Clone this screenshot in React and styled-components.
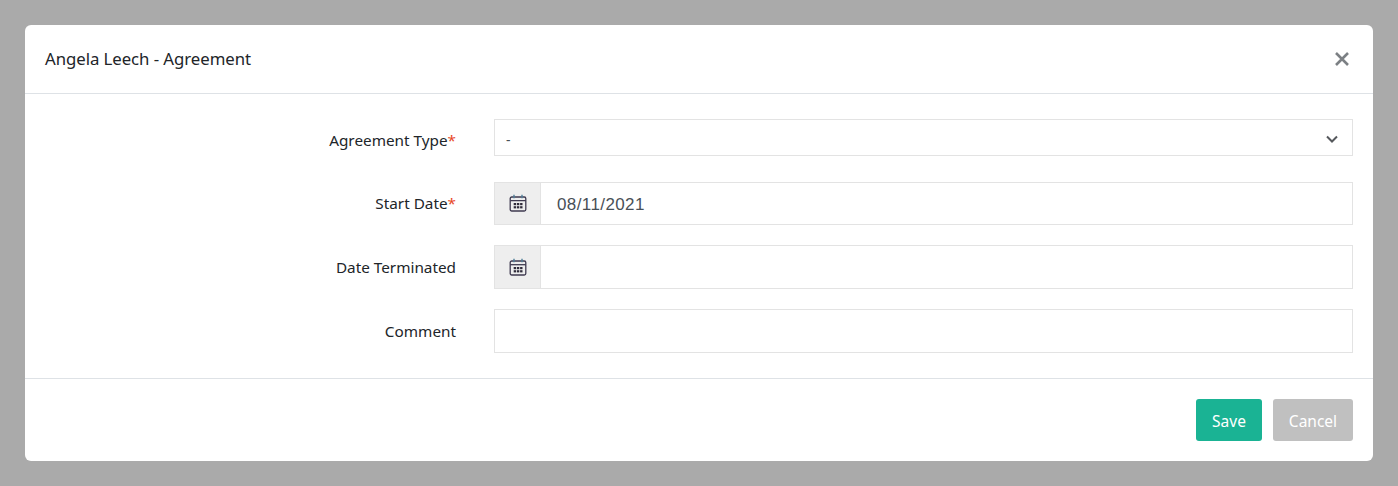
import React from "react";
import styled, { createGlobalStyle } from "styled-components";

const Global = createGlobalStyle`
  html, body { margin: 0; padding: 0; height: 100%; background: #aaaaaa; }
  body { font-family: "Noto Sans", "Open Sans", "Liberation Sans", sans-serif; overflow: hidden; }
`;

const Backdrop = styled.div`
  width: 1398px;
  height: 486px;
  padding: 25px;
  box-sizing: border-box;
  background: #aaaaaa;
`;

const Modal = styled.div`
  width: 1348px;
  height: 436px;
  background: #fff;
  border-radius: 6px;
  display: flex;
  flex-direction: column;
  overflow: hidden;
`;

const Header = styled.header`
  height: 69px;
  box-sizing: border-box;
  border-bottom: 1px solid #dee2e6;
  display: flex;
  align-items: center;
  justify-content: space-between;
  padding: 0 23px 1px 20px;
`;

const Title = styled.h1`
  margin: 0;
  font-size: 16.8px;
  font-weight: 400;
  letter-spacing: -0.06px;
  color: #212529;
`;

const CloseButton = styled.button`
  border: 0;
  background: none;
  padding: 0;
  width: 16px;
  height: 16px;
  display: flex;
  color: #7c8084;
`;

const Body = styled.div`
  height: 285px;
  box-sizing: border-box;
  border-bottom: 1px solid #dee2e6;
  padding: 25px 20px 0 0;
  display: flex;
  flex-direction: column;
`;

const Row = styled.div`
  display: grid;
  grid-template-columns: 431px 859px;
  column-gap: 38px;
  align-items: center;
  margin-bottom: ${(p) => p.$gap}px;
`;

const Label = styled.label`
  text-align: right;
  font-size: 15.3px;
  color: #212529;
  padding-top: ${(p) => p.$top || 0}px;
  padding-bottom: ${(p) => p.$bottom || 0}px;
`;

const Star = styled.span`
  color: #e8481f;
`;

const SelectBox = styled.div`
  height: 37px;
  box-sizing: border-box;
  border: 1px solid #e3e3e3;
  display: flex;
  align-items: center;
  justify-content: space-between;
  padding: 3px 14px 0 11px;
  font-size: 14px;
  color: #495057;
`;

const InputGroup = styled.div`
  display: flex;
  height: ${(p) => p.$h}px;
  box-sizing: border-box;
  border: 1px solid #e3e3e3;
`;

const Addon = styled.div`
  width: 45px;
  flex: none;
  background: #eeeeee;
  border-right: 1px solid #e3e3e3;
  display: flex;
  align-items: center;
  justify-content: center;
  padding-bottom: 1px;
`;

const InputText = styled.div`
  flex: 1;
  display: flex;
  align-items: center;
  padding: 2px 0 0 16px;
  font-family: "Liberation Sans", Arial, sans-serif;
  font-size: 17px;
  letter-spacing: 0.4px;
  color: #495057;
`;

const TextBox = styled.div`
  height: 44px;
  box-sizing: border-box;
  border: 1px solid #e3e3e3;
`;

const Footer = styled.footer`
  flex: 1;
  display: flex;
  justify-content: flex-end;
  gap: 11px;
  padding: 20px 20px 0 0;
`;

const Button = styled.button`
  height: 42px;
  width: ${(p) => p.$w}px;
  border: 0;
  border-radius: 3px;
  padding: 2px 0 0 0;
  background: ${(p) => p.$bg};
  color: #fff;
  font-family: inherit;
  font-size: 15.5px;
`;

const CalendarIcon = () => (
  <svg width="18" height="18" viewBox="0 0 18 18" fill="none">
    <rect x="1.2" y="3" width="15.6" height="14" rx="1.5" stroke="#3f3a50" strokeWidth="1.3" />
    <path d="M1.2 6.7h15.6" stroke="#3f3a50" strokeWidth="1.3" />
    <path d="M5 .8v3.4M13 .8v3.4" stroke="#4f7f99" strokeWidth="1.4" />
    <g fill="#2f2b3a">
      <rect x="4.7" y="9" width="2.4" height="2.2" />
      <rect x="7.9" y="9" width="2.4" height="2.2" />
      <rect x="11.1" y="9" width="2.4" height="2.2" />
      <rect x="4.7" y="12.2" width="2.4" height="2.2" />
      <rect x="7.9" y="12.2" width="2.4" height="2.2" />
      <rect x="11.1" y="12.2" width="2.4" height="2.2" />
    </g>
  </svg>
);

export default function App() {
  return (
    <>
      <Global />
      <Backdrop>
        <Modal>
          <Header>
            <Title>Angela Leech - Agreement</Title>
            <CloseButton aria-label="Close">
              <svg width="16" height="16" viewBox="0 0 16 16">
                <path d="M2 2l12 12M14 2L2 14" stroke="currentColor" strokeWidth="2.6" />
              </svg>
            </CloseButton>
          </Header>
          <Body>
            <Row $gap={26}>
              <Label $top={4}>Agreement Type<Star>*</Star></Label>
              <SelectBox>
                <span>-</span>
                <svg width="12" height="8" viewBox="0 0 12 8" fill="none">
                  <path d="M1 1.5l5 5 5-5" stroke="#55585c" strokeWidth="2" />
                </svg>
              </SelectBox>
            </Row>
            <Row $gap={20}>
              <Label $bottom={2}>Start Date<Star>*</Star></Label>
              <InputGroup $h={43}>
                <Addon><CalendarIcon /></Addon>
                <InputText>08/11/2021</InputText>
              </InputGroup>
            </Row>
            <Row $gap={20}>
              <Label>Date Terminated</Label>
              <InputGroup $h={44}>
                <Addon><CalendarIcon /></Addon>
                <InputText />
              </InputGroup>
            </Row>
            <Row $gap={0}>
              <Label>Comment</Label>
              <TextBox />
            </Row>
          </Body>
          <Footer>
            <Button $w={66} $bg="#1ab394">Save</Button>
            <Button $w={80} $bg="#c0c0c0">Cancel</Button>
          </Footer>
        </Modal>
      </Backdrop>
    </>
  );
}
